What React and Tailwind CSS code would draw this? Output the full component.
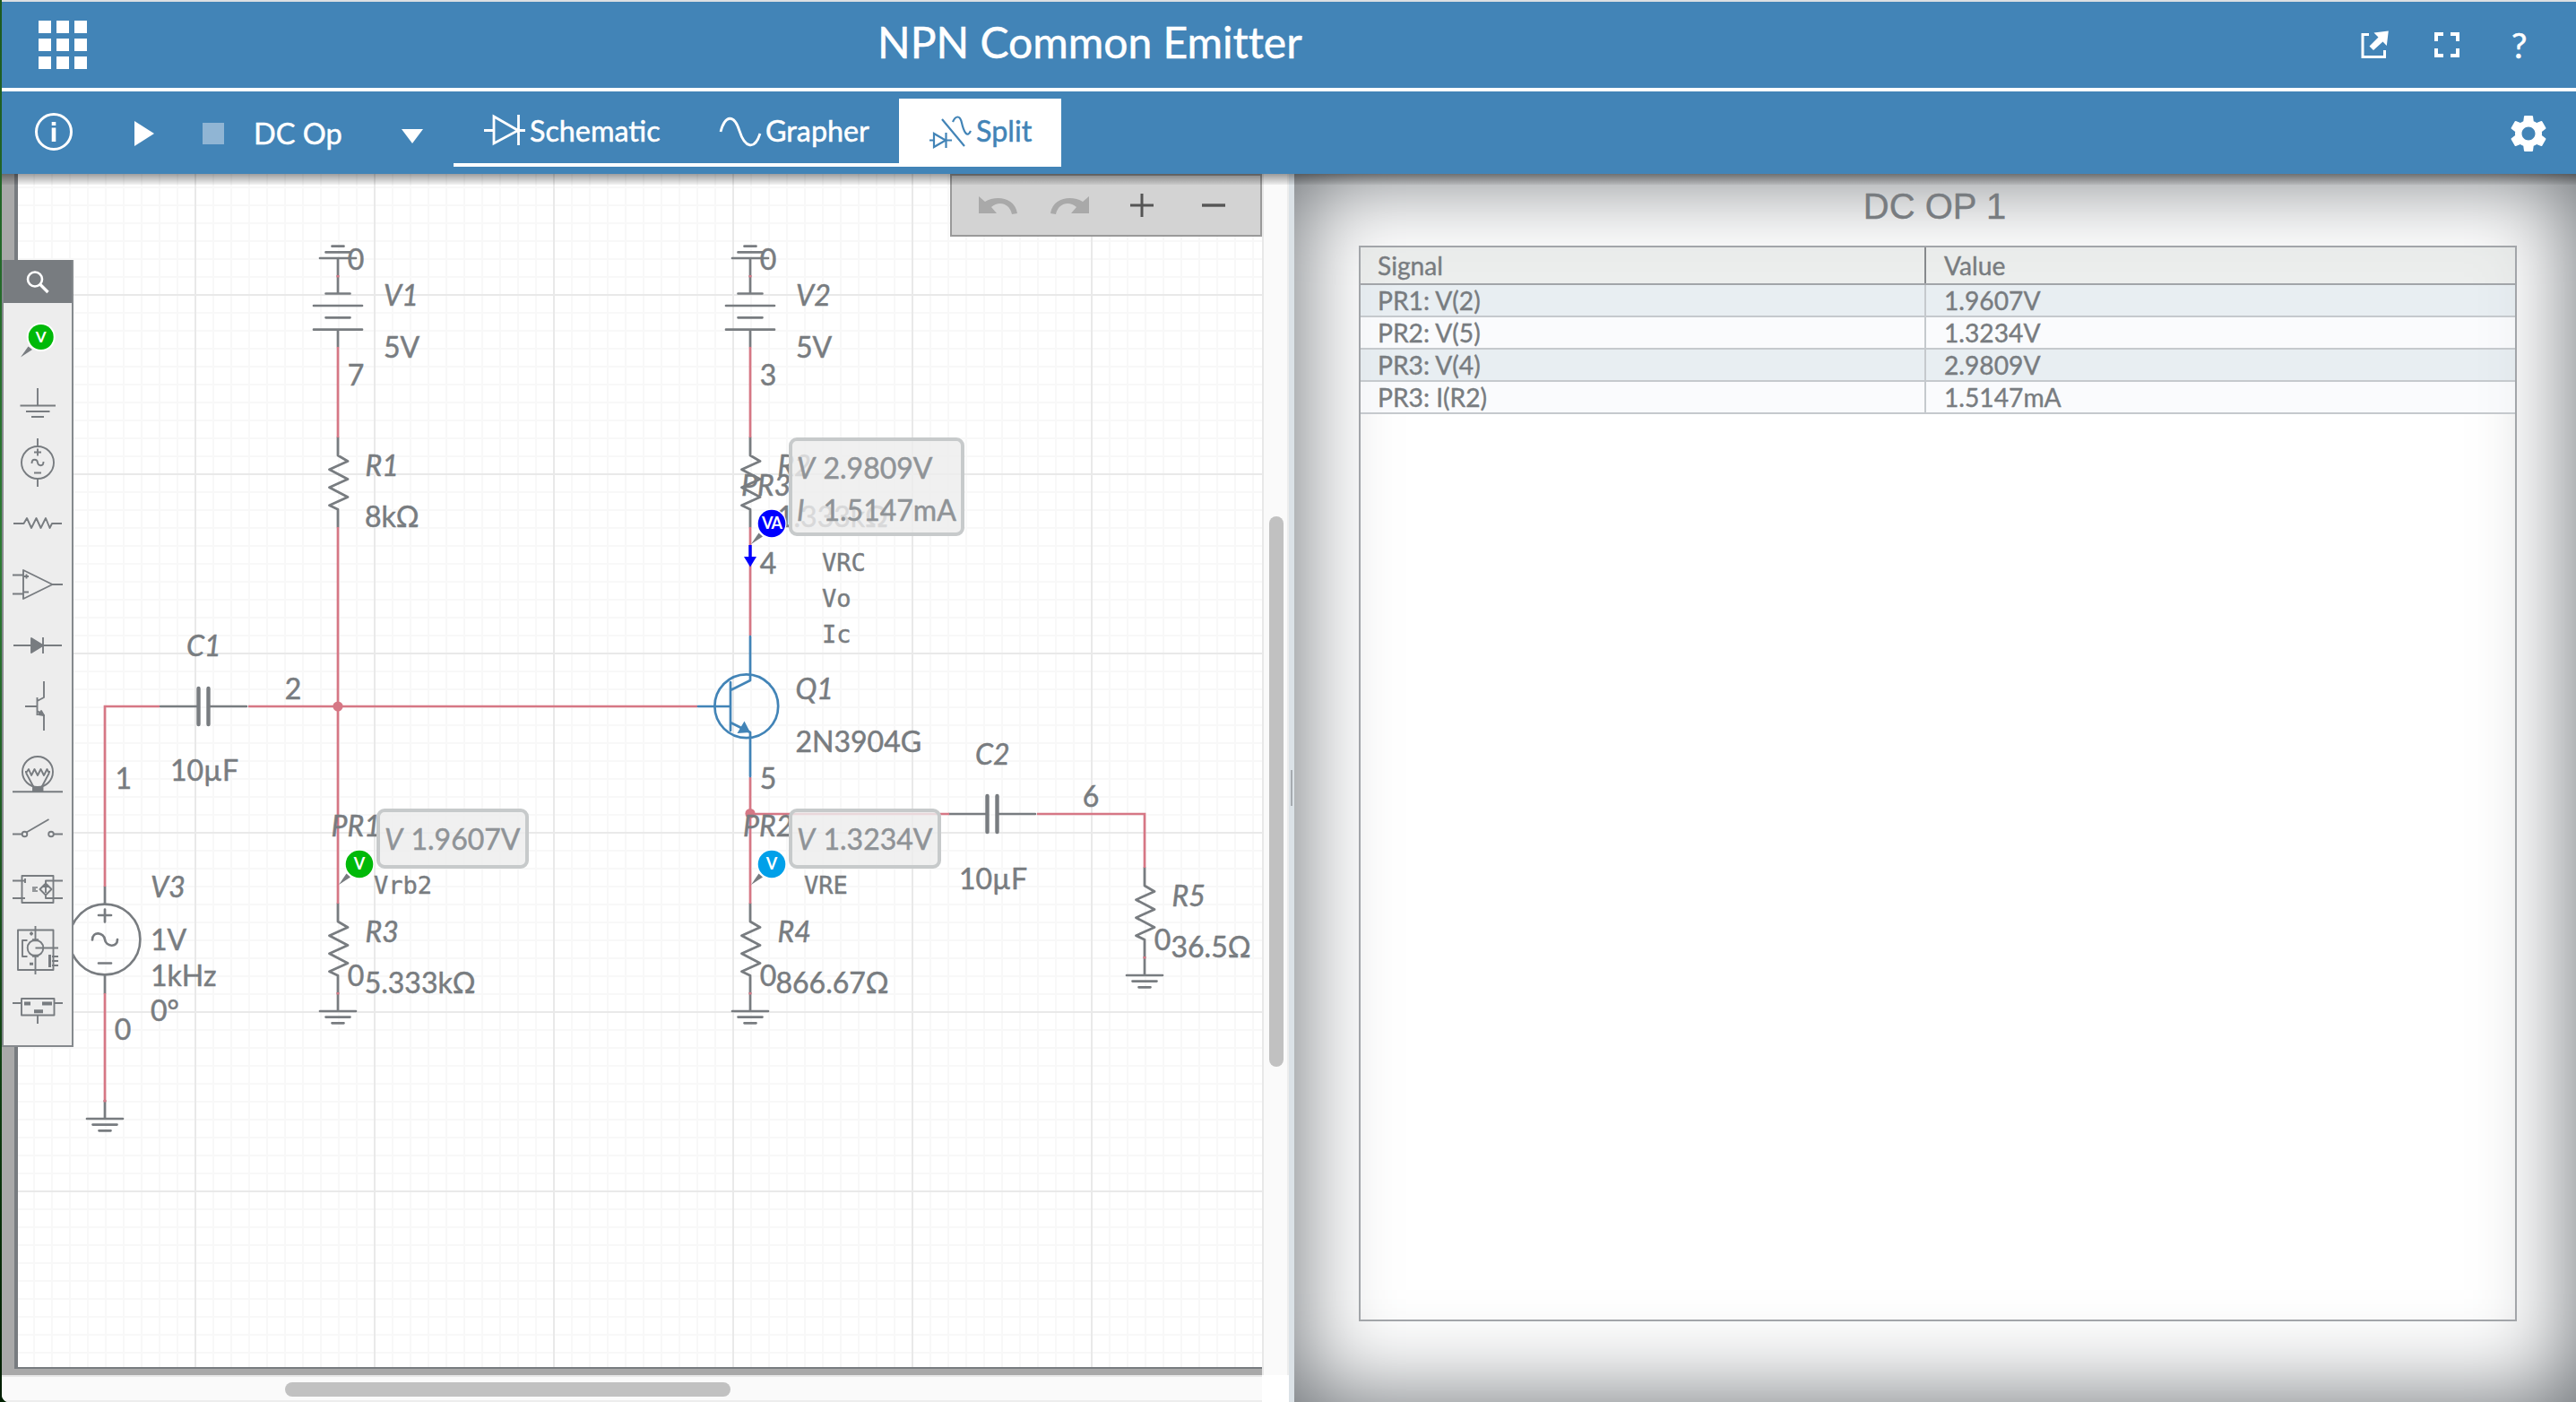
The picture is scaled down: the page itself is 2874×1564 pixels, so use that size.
import React from "react";
import { MdSettings } from "react-icons/md";

const GRAY = "#787c80";
const WIRE = "#d67785";
const BLUE = "#4284b7";

/* ---------- schematic primitives ---------- */

function Line({ d, color = GRAY, w = 2.7 }) {
  return <path d={d} fill="none" stroke={color} strokeWidth={w} strokeLinecap="round" strokeLinejoin="round" />;
}

function Wire({ d }) {
  return <path d={d} fill="none" stroke={WIRE} strokeWidth="2.7" />;
}

function Ground({ x, y, up = false }) {
  const s = up ? -1 : 1;
  return (
    <>
      <Line
        d={`M${x} ${y}V${y + 20 * s}M${x - 20} ${y + 20 * s}h40M${x - 13.5} ${y + 26.6 * s}h27M${x - 6.5} ${y + 33.3 * s}h13`}
      />
      <rect x={x - 1.5} y={y - 1} width="3" height="2.4" fill={WIRE} />
    </>
  );
}

function Battery({ x, y }) {
  return (
    <Line
      d={`M${x} ${y}v19.5M${x - 13.5} ${y + 19.5}h27M${x - 27} ${y + 33}h54M${x - 13.5} ${y + 46.3}h27M${x - 27} ${y + 59.7}h54M${x} ${y + 59.7}v19`}
    />
  );
}

function Resistor({ x, y }) {
  return <Line w={2.8} d={`M${x} ${y}v20l11 6.5l-20.5 9.2l20.5 10.8l-20.5 9.2l20.5 10.8l-20.5 9.2l9.5 4.5v19.5`} />;
}

function Capacitor({ x, y }) {
  return (
    <>
      <Line d={`M${x - 48} ${y}h42M${x + 6} ${y}h42`} />
      <Line w={4.4} d={`M${x - 5.5} ${y - 20}v40M${x + 5.5} ${y - 20}v40`} />
    </>
  );
}

function T({ x, y, i, children }) {
  return (
    <text
      x={x}
      y={y}
      fontSize="32"
      fill={GRAY}
      stroke={GRAY}
      strokeWidth="0.5"
      fontStyle={i ? "italic" : "normal"}
      fontFamily="Lato, sans-serif"
    >
      {children}
    </text>
  );
}

function Mono({ x, y, children }) {
  return (
    <text x={x} y={y} fontSize="27" fill={GRAY} stroke={GRAY} strokeWidth="0.4" fontFamily="'DejaVu Sans Mono', monospace">
      {children}
    </text>
  );
}

function Probe({ x, y, color, label = "V" }) {
  return (
    <>
      <path d={`M${x - 23} ${y + 23}l8.5 -12.5l4.5 4z`} fill={GRAY} />
      <circle cx={x} cy={y} r="16.5" fill="#fff" />
      <circle cx={x} cy={y} r="15.3" fill={color} />
      <text
        x={x}
        y={y + 6}
        fontSize="18"
        fontWeight="700"
        textAnchor="middle"
        letterSpacing={label === "VA" ? "-1" : "0"}
        fill="#fff"
        fontFamily="Lato, sans-serif"
      >
        {label}
      </text>
    </>
  );
}

function Readout({ x, y, w, h, rows }) {
  return (
    <>
      <rect x={x + 2} y={y + 2} width={w - 4} height={h - 4} rx="7" fill="#ededed" fillOpacity="0.82" stroke="#c7cacb" strokeWidth="4" />
      {rows.map(([k, v], n) => (
        <g key={k} fontSize="32" fill="#8f9397" stroke="#8f9397" strokeWidth="0.5" fontFamily="Lato, sans-serif">
          <text x={x + 9} y={y + 45.5 + n * 47} fontStyle="italic">
            {k}
          </text>
          <text x={x + 38.5} y={y + 45.5 + n * 47}>
            {v}
          </text>
        </g>
      ))}
    </>
  );
}

function Schematic() {
  return (
    <svg className="block h-[1331px] w-[1388px] shrink-0" viewBox="20 194 1388 1331">
      <defs>
        <pattern id="minor" x="17" y="8" width="20" height="20" patternUnits="userSpaceOnUse">
          <path d="M1 0V20M0 1H20" stroke="#f8f8f8" strokeWidth="2" />
        </pattern>
        <pattern id="major" x="17" y="128" width="200" height="200" patternUnits="userSpaceOnUse">
          <path d="M1 0V200M0 1H200" stroke="#e9e9e9" strokeWidth="2" />
        </pattern>
      </defs>
      <rect x="20" y="194" width="1388" height="1331" fill="#fff" />
      <rect x="20" y="194" width="1388" height="1331" fill="url(#minor)" />
      <rect x="20" y="194" width="1388" height="1331" fill="url(#major)" />

      <Battery x={377} y={308} />
      <Ground x={377} y={308} up />
      <Battery x={837} y={308} />
      <Ground x={837} y={308} up />

      <Resistor x={377} y={488} />
      <Resistor x={837} y={488} />
      <Resistor x={377} y={1008} />
      <Resistor x={837} y={1008} />
      <Resistor x={1277} y={968} />

      <Capacitor x={227} y={788} />
      <Capacitor x={1107} y={908} />

      <Line d="M117 989V1008M117 1088.5V1108" />
      <circle cx="117" cy="1048" r="39.4" fill="none" stroke={GRAY} strokeWidth="2.6" />
      <Line d="M110 1021h14M117 1014.5v14M110 1074.5h14M103 1048.5C103 1038 116 1040 117 1048S131 1058 131 1048" />

      <Wire d="M178 788H117V989M117 1108V1229M277 788H778M377 387V488M377 588V1008" />
      <Wire d="M837 387V488M837 588V709M837 867V1008M837 908H1059M1157 908H1277V968" />
      <circle cx="377" cy="788" r="5.6" fill={WIRE} />
      <circle cx="837" cy="907.5" r="5.6" fill={WIRE} />

      <Ground x={377} y={1108} />
      <Ground x={837} y={1108} />
      <Ground x={1277} y={1068} />
      <Ground x={117} y={1228} />

      <circle cx="832.8" cy="787.8" r="35.4" fill="none" stroke={BLUE} strokeWidth="2.7" />
      <Line color={BLUE} d="M779 788H815M815 761V815M815 770L837 759V710M815 806L837 817V866" />
      <path d="M822.5 818L830.5 804.5L837 817Z" fill={BLUE} />

      <T x={387.7} y={300.5}>0</T>
      <T x={428} y={340.5} i>V1</T>
      <T x={428} y={399.3}>5V</T>
      <T x={387.7} y={430.3}>7</T>
      <T x={407.5} y={531.3} i>R1</T>
      <T x={407} y={588.3}>8kΩ</T>

      <T x={847.7} y={300.5}>0</T>
      <T x={888} y={340.5} i>V2</T>
      <T x={888} y={399.3}>5V</T>
      <T x={847.7} y={430.3}>3</T>
      <T x={867.5} y={531.3} i>R2</T>
      <T x={867} y={588.3}>1.333kΩ</T>
      <T x={827} y={552.5} i>PR3</T>
      <T x={847.7} y={640.3}>4</T>
      <Mono x={917} y={637.3}>VRC</Mono>
      <Mono x={917} y={677.3}>Vo</Mono>
      <Mono x={917} y={717.3}>Ic</Mono>

      <T x={208} y={732.3} i>C1</T>
      <T x={190} y={871}>10µF</T>
      <T x={317.7} y={780.3}>2</T>
      <T x={128.500} y={880.3}>1</T>
      <T x={168} y={1000.7} i>V3</T>
      <T x={168} y={1060.3}>1V</T>
      <T x={168} y={1099.5}>1kHz</T>
      <T x={168} y={1138.500}>0°</T>
      <T x={127.7} y={1160.3}>0</T>

      <T x={369.5} y={932.5} i>PR1</T>
      <Mono x={417} y={997}>Vrb2</Mono>
      <T x={407.5} y={1051.3} i>R3</T>
      <T x={387.7} y={1100.3}>0</T>
      <T x={406.7} y={1108.3}>5.333kΩ</T>

      <T x={887.5} y={780.3} i>Q1</T>
      <T x={887.5} y={839}>2N3904G</T>
      <T x={1088} y={852.5} i>C2</T>
      <T x={847.7} y={880.3}>5</T>
      <T x={1207.7} y={900.3}>6</T>
      <T x={1070} y={991.5}>10µF</T>
      <T x={1307.5} y={1011.3} i>R5</T>
      <T x={1287.7} y={1060.3}>0</T>
      <T x={1306.5} y={1068.3}>36.5Ω</T>
      <T x={829} y={932.5} i>PR2</T>
      <Mono x={897} y={997}>VRE</Mono>
      <T x={867.5} y={1051.3} i>R4</T>
      <T x={847.7} y={1100.3}>0</T>
      <T x={865.5} y={1108.3}>866.67Ω</T>

      <path d="M837 608V624" stroke="#00f" strokeWidth="3.4" />
      <path d="M830 621H844L837 632.5Z" fill="#00f" />
      <Probe x={401} y={964} color="#00b909" />
      <Probe x={861} y={964} color="#00a0e9" />
      <Probe x={861} y={584} color="#0000ff" label="VA" />
      <Readout x={420} y={902} w={170} h={67} rows={[["V", "1.9607V"]]} />
      <Readout x={880} y={902} w={170} h={67} rows={[["V", "1.3234V"]]} />
      <Readout x={880} y={488} w={196} h={110} rows={[["V", "2.9809V"], ["I", "1.5147mA"]]} />
    </svg>
  );
}

/* ---------- component palette ---------- */

function PaletteIcon({ box, className, children }) {
  return (
    <svg
      className={className}
      viewBox={box}
      fill="none"
      stroke={GRAY}
      strokeWidth="1.9"
      strokeLinejoin="round"
    >
      {children}
    </svg>
  );
}

function Palette() {
  return (
    <div className="absolute left-0 top-[96px] flex h-[878px] w-[80px] flex-col border-b-2 border-l-2 border-r-2 border-[#85898d] bg-[#ededed]">
      <div className="flex h-[48px] shrink-0 items-center justify-center bg-[#787c80]">
        <svg className="mr-px mt-[2px] size-[28px]" viewBox="0 0 28 28" fill="none" stroke="#fff">
          <circle cx="11" cy="10.500" r="8" strokeWidth="2.6" />
          <path d="M16.500 16L25.500 25" strokeWidth="3.4" />
        </svg>
      </div>
      <PaletteIcon className="h-[80px] w-full" box="4 338 76 80">
        <path d="M23 398.5l8.5 -12l4.500 3.500z" fill={GRAY} stroke="none" />
        <circle cx="45.700" cy="376" r="16" fill="#fff" stroke="none" />
        <circle cx="45.700" cy="376" r="14" fill="#00b909" stroke="none" />
        <text x="45.7" y="381.5" fontSize="17" fontWeight="700" textAnchor="middle" fill="#fff" stroke="none" fontFamily="Lato, sans-serif">
          V
        </text>
      </PaletteIcon>
      <PaletteIcon className="h-[62px] w-full" box="4 418 76 62">
        <path d="M42 433V452.500M22.500 452.500H62M29 459H55.500M35 465H49" />
      </PaletteIcon>
      <PaletteIcon className="h-[70px] w-full" box="4 480 76 70">
        <circle cx="42" cy="516" r="18" />
        <path d="M42 489V498M42 534V543M38 504.500H46M42 500.500V508.500M38 527.500H46M35.500 517C35.500 511 41.500 512 42 516S48.500 521 48.500 515" />
      </PaletteIcon>
      <PaletteIcon className="h-[68px] w-full" box="4 550 76 68">
        <path d="M15 584H26.500L30 578L35 589L40.500 578L45.500 589L51 578L55.500 589L58 584H69" />
      </PaletteIcon>
      <PaletteIcon className="h-[68px] w-full" box="4 618 76 68">
        <path d="M26 636V668L58.500 652ZM14 641.500H26M14 662.500H26M58.500 652H70M27 643H32M29.500 640.500V645.500M27 660.500H32" />
      </PaletteIcon>
      <PaletteIcon className="h-[66px] w-full" box="4 686 76 66">
        <path d="M35 712V728L48 720Z" fill={GRAY} />
        <path d="M15 720H69M48 711V729" />
      </PaletteIcon>
      <PaletteIcon className="h-[78px] w-full" box="4 752 76 78">
        <path d="M28 788H41.500M41.500 778V798M41.500 782L49 778V760M41.500 793L49 798V815" />
        <path d="M43 797L46 793L49 798Z" fill={GRAY} />
      </PaletteIcon>
      <PaletteIcon className="h-[70px] w-full" box="4 830 76 70">
        <circle cx="42" cy="861" r="17" />
        <path d="M28 861H30L32 858L35 865L38.500 858L42 865L45.500 858L49 865L52.500 858L54 861H56M29 862L37.500 878M55 862L46.500 878M14 883.300H70" />
        <rect x="37" y="878" width="10.500" height="5" fill={GRAY} />
      </PaletteIcon>
      <PaletteIcon className="h-[60px] w-full" box="4 900 76 60">
        <circle cx="27.500" cy="930.500" r="2.800" />
        <circle cx="57" cy="930.500" r="2.800" />
        <path d="M14 930.500H24.500M60 930.500H70M29.500 928.500L54.500 914" />
      </PaletteIcon>
      <PaletteIcon className="h-[64px] w-full" box="4 960 76 64">
        <rect x="24.500" y="977" width="35" height="30" />
        <path d="M14 982.500H28M14 1002H28M51 985.500V982.500H70M51 998.500V1002H70M51 985.500L57.500 992L51 998.500L44.500 992ZM51 987V996M49 989.500L51 987.500L53 989.500M28 980V985" />
        <path d="M36 990H42M36 992H40M36 994H42" strokeWidth="1.500" />
      </PaletteIcon>
      <PaletteIcon className="h-[72px] w-full" box="4 1024 76 72">
        <rect x="20" y="1037.500" width="39.500" height="44.500" />
        <circle cx="39.500" cy="1057.500" r="8.800" />
        <path d="M39.500 1033V1049M39.500 1066V1087M30.500 1049H25V1067H30.500M39.500 1057.500H65M58 1067H65M58 1072H65M58 1077H65M33 1041.500H37M35 1039.500V1043.500" />
        <path d="M36 1048.800H43M36 1066.300H43M33 1075.300H37M55.500 1065V1079" strokeWidth="3" />
      </PaletteIcon>
      <PaletteIcon className="h-[70px] w-full" box="4 1096 76 70">
        <rect x="24" y="1114" width="36.500" height="18.500" />
        <path d="M14 1119H24M60.500 1119H70M42 1132.500V1142" />
        <path d="M27 1119.500H34M47 1119.500H58M38 1128.300H48" strokeWidth="4" />
      </PaletteIcon>
    </div>
  );
}

/* ---------- bars ---------- */

function TitleBar() {
  return (
    <header className="flex h-[96px] shrink-0 items-center bg-[#4284b7] text-white">
      <div className="ml-[41px] grid grid-cols-3 gap-[6px]">
        {Array.from({ length: 9 }, (_, n) => (
          <span key={n} className="size-[14px] bg-white" />
        ))}
      </div>
      <h1 className="-mt-[6px] ml-[882px] w-[1655px] whitespace-nowrap text-[48px] leading-none [-webkit-text-stroke:0.5px_white] [font-variant-ligatures:none]">
        NPN Common Emitter
      </h1>
      <div className="flex items-center">
        <svg className="h-[32px] w-[32px]" viewBox="2634 33 32 32" fill="none">
          <path d="M2643 37.500H2636V62.500H2660.500V55" stroke="#fff" strokeWidth="3" />
          <path d="M2664.800 33.500L2662.800 50L2658.500 45.500L2648 55L2643.500 50.500L2653.500 40.500L2648.500 35.500Z" fill="#fff" />
        </svg>
        <svg className="ml-[50px] size-[28px]" viewBox="0 0 28 28" fill="none" stroke="#fff" strokeWidth="4">
          <path d="M2 10V2H10M18 2H26V10M26 18V26H18M10 26H2V18" />
        </svg>
        <span className="ml-[58px] text-[39px] leading-none [-webkit-text-stroke:0.5px_white]">?</span>
      </div>
    </header>
  );
}

function ToolBar() {
  return (
    <nav className="flex h-[92px] shrink-0 bg-[#4284b7] text-[32.5px] leading-none text-white">
      <div className="flex w-[504px] items-center pb-[2px]">
        <svg className="ml-[36px] size-[44px]" viewBox="0 0 44 44" fill="none">
          <circle cx="22" cy="22" r="19.500" stroke="#fff" strokeWidth="3" />
          <path d="M22 17.500V33" stroke="#fff" strokeWidth="4.600" />
          <path d="M22 11V15" stroke="#fff" strokeWidth="4.600" />
        </svg>
        <svg className="ml-[68px] mt-[3px] h-[28px] w-[22px]" viewBox="0 0 22 28">
          <path d="M0 0L22 14L0 28Z" fill="#fff" />
        </svg>
        <span className="ml-[54px] mt-[3px] size-[24px] bg-[#90b5d4]" />
        <span className="ml-[33px] mt-[4px] w-[165px] whitespace-nowrap [-webkit-text-stroke:0.5px_white]">DC Op</span>
        <svg className="mt-[9px] h-[16px] w-[24px]" viewBox="0 0 24 16">
          <path d="M0 0H24L12 16Z" fill="#fff" />
        </svg>
      </div>
      <div className="mt-[8px] flex h-[76px] text-[32.3px]">
        <div className="flex w-[260px] items-center border-b-4 border-white pl-[34px]">
          <svg className="mb-[2px] h-[36px] w-[46px]" viewBox="0 0 46 36" fill="none" stroke="#fff" strokeWidth="2.800">
            <path d="M0 18.500H11M11 3V33L38 18.500ZM38.500 1V35M38 18.500H46" />
          </svg>
          <span className="ml-[5px] [-webkit-text-stroke:0.5px_white]">Schematic</span>
        </div>
        <div className="flex w-[237px] items-center border-b-4 border-white pl-[36px]">
          <svg className="mt-[4px] h-[36px] w-[48px]" viewBox="0 0 48 36" fill="none" stroke="#fff" strokeWidth="2.800">
            <path d="M2 17C7 -2 17 -3 23 16S40 38 46 19" />
          </svg>
          <span className="ml-[4px] [-webkit-text-stroke:0.5px_white]">Grapher</span>
        </div>
        <div className="flex w-[181px] items-center border-b-4 border-white bg-white pl-[34px] text-[#4284b7]">
          <svg className="mt-[2px] h-[38px] w-[48px]" viewBox="0 0 48 38" fill="none" stroke="#4284b7" strokeWidth="2.200">
            <path d="M0 28.500H5M5 21V36L18 28.500ZM18.500 20V37M18 28.500H25M14 5L39 35" />
            <path d="M26 8C29 1 34 0 36 9S42 27 46 18" />
          </svg>
          <span className="ml-[4px] [-webkit-text-stroke:0.5px_#4284b7]">Split</span>
        </div>
      </div>
      <MdSettings className="ml-auto mr-[28px] mt-[22px] size-[50px]" />
    </nav>
  );
}

function EditBar() {
  return (
    <div className="absolute left-[1058px] top-0 flex h-[70px] w-[348px] items-center border-2 border-[#999] bg-[#d3d3d3]">
      <svg className="ml-[30px] h-[20px] w-[43px]" viewBox="0 0 43 20">
        <path d="M0 0L7 6C18 -1 40 0 43 19L37 20C34 7 22 5 14 12L20 19H0Z" fill="#a9a9a9" />
      </svg>
      <svg className="ml-[37px] h-[20px] w-[43px] -scale-x-100" viewBox="0 0 43 20">
        <path d="M0 0L7 6C18 -1 40 0 43 19L37 20C34 7 22 5 14 12L20 19H0Z" fill="#a9a9a9" />
      </svg>
      <svg className="ml-[46px] size-[26px]" viewBox="0 0 26 26" stroke="#555" strokeWidth="3">
        <path d="M0 13H26M13 0V26" />
      </svg>
      <svg className="ml-[54px] size-[26px]" viewBox="0 0 26 26" stroke="#555" strokeWidth="3.400">
        <path d="M0 13H26" />
      </svg>
    </div>
  );
}

/* ---------- results ---------- */

const RESULTS = [
  ["PR1: V(2)", "1.9607V"],
  ["PR2: V(5)", "1.3234V"],
  ["PR3: V(4)", "2.9809V"],
  ["PR3: I(R2)", "1.5147mA"],
];

function Results() {
  return (
    <section className="flex h-full flex-1 flex-col bg-white pl-[72px] pr-[66px] text-[28.2px] text-[#787c80] shadow-[inset_0_0_104px_#63686d] [-webkit-text-stroke:0.4px_#787c80]">
      <h2 className="flex h-[80px] items-center justify-center pb-[8px] pr-[7px] font-['Liberation_Sans',Arial,sans-serif] text-[40px] leading-none">
        DC OP 1
      </h2>
      <div className="h-[1200px] border-2 border-[#a2a5a9]">
        <div className="flex h-[42px] items-center border-b-2 border-[#a2a5a9] bg-[#e0e3e1]/60 leading-none">
          <div className="flex h-full w-[631px] items-center border-r-2 border-[#86898c] pl-[19px]">Signal</div>
          <div className="pl-[20px]">Value</div>
        </div>
        {RESULTS.map(([signal, value]) => (
          <div
            key={signal}
            className="flex h-[36px] items-center border-b-2 border-[#c5c9cd] leading-none odd:bg-[#f6f8fb]/60 even:bg-[#d8e3ea]/60"
          >
            <div className="flex h-full w-[631px] items-center border-r-2 border-[#c5c9cd] pl-[19px]">{signal}</div>
            <div className="pl-[20px]">{value}</div>
          </div>
        ))}
      </div>
    </section>
  );
}

export default function App() {
  return (
    <div className="flex h-[1564px] w-[2874px] overflow-hidden bg-[#032403] font-['Lato',sans-serif]">
      <div className="w-[2px] shrink-0 bg-linear-to-b from-[#1c5a20] via-[#2c7a33] via-40% to-[#021d02]" />
      <div className="flex flex-1 flex-col overflow-hidden rounded-bl-[8px] bg-white">
        <div className="h-[2px] shrink-0 bg-[#dcdfe2]" />
        <TitleBar />
        <div className="h-[4px] shrink-0 bg-white" />
        <ToolBar />
        <main className="relative flex h-[1370px]">
          <div className="flex w-[1406px] flex-col">
            <div className="flex h-[1340px] flex-col bg-[#a9a9a9] pl-[14px]">
              <div className="border-b-2 border-l-4 border-[#787c80]">
                <Schematic />
              </div>
            </div>
            <div className="h-[30px] border-b-2 border-t-2 border-b-[#ededed] border-t-[#e8e8e8] bg-[#fafafa] pl-[316px] pt-[6px]">
              <div className="h-[16px] w-[497px] rounded-full bg-[#c1c1c1]" />
            </div>
          </div>
          <div className="flex w-[30px] flex-col">
            <div className="h-[1340px] border-l-2 border-r-2 border-l-[#e8e8e8] border-r-[#ededed] bg-[#fafafa] pl-[6px] pt-[382px]">
              <div className="h-[614px] w-[16px] rounded-full bg-[#c1c1c1]" />
            </div>
          </div>
          <div className="flex w-[6px] items-center justify-center bg-[#dbe2e7]">
            <div className="h-[40px] w-[2px] bg-[#a6abb0]" />
          </div>
          <Results />
          <Palette />
          <EditBar />
          <div className="pointer-events-none absolute inset-x-0 top-0 h-[12px] bg-linear-to-b from-black/38 to-black/5" />
        </main>
      </div>
    </div>
  );
}
